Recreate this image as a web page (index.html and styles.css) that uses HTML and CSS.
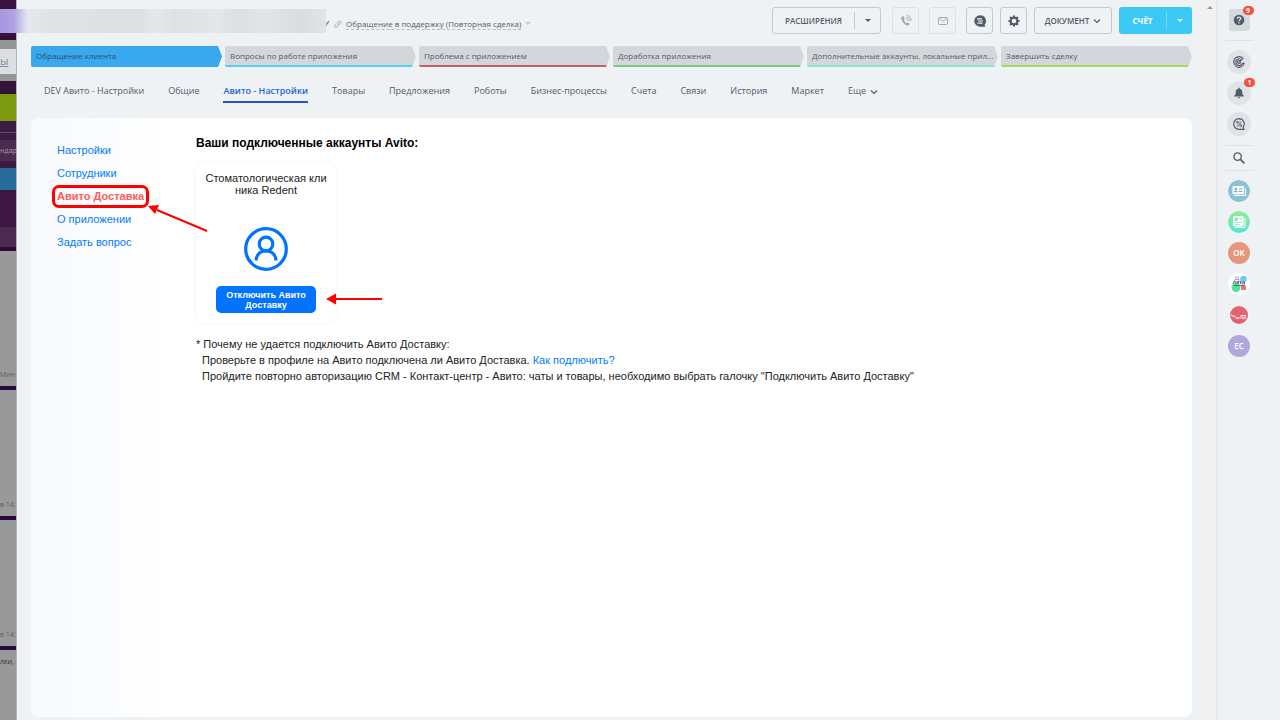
FILE: index.html
```html
<!DOCTYPE html>
<html lang="ru">
<head>
  <meta charset="UTF-8">
  <meta name="viewport" content="width=device-width, initial-scale=1.0">
  <title>Авито - Настройки</title>
  <link rel="stylesheet" href="styles.css">
</head>
<body>
  <div class="underlay">
    <div class="strip strip-top"></div>
    <div class="strip strip-search"><span class="strip-box">ы</span></div>
    <div class="strip strip-dark"></div>
    <div class="strip strip-green"></div>
    <div class="strip strip-line"></div>
    <div class="strip strip-view">ндар</div>
    <div class="strip strip-gap"></div>
    <div class="strip strip-blue"></div>
    <div class="strip strip-purple"></div>
    <div class="strip strip-row"></div>
    <div class="strip strip-card strip-first"><span>Мин</span></div>
    <div class="strip strip-card"><span>в 14:</span></div>
    <div class="strip strip-card"><span>в 14:</span></div>
    <div class="strip strip-last">лки,</div>
  </div>

  <div class="slider">
    <div class="blurred"></div>
    <header class="header">
      <div class="title">
        <svg class="icon-pen" viewBox="0 0 6 8"><path d="M1 7l1-2 3-4" fill="none" stroke="#8b929b" stroke-width="1.5"/></svg>
        <svg class="icon-link" viewBox="0 0 8 8"><path d="M3 5l2.500-2.500M2.500 3.500l2-2a1.400 1.400 0 0 1 2 2l-3.500 3.500a1.400 1.400 0 0 1-2-2l.8-.8" fill="none" stroke="#a0a6ad" stroke-width=".9"/></svg>
        <a class="funnel" href="#">Обращение в поддержку (Повторная сделка)</a>
        <span class="caret caret-light"></span>
      </div>
      <div class="toolbar">
        <div class="btn-group">
          <button class="btn btn-main">РАСШИРЕНИЯ</button>
          <button class="btn btn-drop" aria-label="Ещё расширения"><span class="caret"></span></button>
        </div>
        <button class="btn btn-icon btn-off" aria-label="Позвонить">
          <svg viewBox="0 0 14 14"><path d="M3.200 2.300c-1.500.8-1.200 3.300.3 5.500s3.900 4 5.800 3.700c1-.2 1.500-1.200 1.200-1.700L8.800 8.500c-.5-.3-.9.600-1.400.4C6.500 8.500 5.300 7 5 6c-.1-.5.8-.7.600-1.300L4.700 2.600c-.2-.5-.9-.6-1.500-.3z" fill="#a5abb2"/><path d="M7 4.600a2.500 2.500 0 0 1 2 2.400M7.300 2.900a4.200 4.200 0 0 1 3.400 4M7.600 1.300a5.800 5.800 0 0 1 4.700 5.400" fill="none" stroke="#a5abb2" stroke-width=".9"/></svg>
        </button>
        <button class="btn btn-icon btn-off" aria-label="Письмо">
          <svg viewBox="0 0 14 14"><rect x="2.500" y="3.500" width="9" height="7" rx="1" fill="none" stroke="#a5abb2"/><path d="M3 4l4 3.500L11 4" fill="none" stroke="#a5abb2"/></svg>
        </button>
        <button class="btn btn-icon" aria-label="Чат">
          <svg viewBox="0 0 14 14"><path d="M7 1.300a5.700 5.700 0 1 0 0 11.400h4.500c.8 0 1-.5.500-1.100l-.5-.8A5.700 5.700 0 0 0 7 1.300z" fill="#525c69"/><path d="M4 4.900h5M5 7h5M4.500 9.100h5" stroke="#eef2f4" stroke-width="1.100"/></svg>
        </button>
        <button class="btn btn-icon" aria-label="Настройки">
          <svg viewBox="0 0 14 14"><path d="M7 1.500v11M1.500 7h11M3.100 3.100l7.800 7.800M10.900 3.100l-7.800 7.800" stroke="#525c69" stroke-width="2.200"/><circle cx="7" cy="7" r="3.300" fill="#eef2f4" stroke="#525c69" stroke-width="2"/></svg>
        </button>
        <button class="btn btn-doc">ДОКУМЕНТ <svg class="chevron" viewBox="0 0 8 8"><path d="M1 2.500l3 3 3-3" fill="none" stroke="#525c69" stroke-width="1.200"/></svg></button>
        <div class="btn-group btn-primary">
          <button class="btn btn-bill">СЧЁТ</button>
          <button class="btn btn-drop" aria-label="Ещё счёт"><span class="caret caret-white"></span></button>
        </div>
      </div>
    </header>

    <div class="stages">
      <div class="stage stage-active">Обращение клиента</div>
      <div class="stage stage-cyan">Вопросы по работе приложения</div>
      <div class="stage stage-red">Проблема с приложением</div>
      <div class="stage stage-green">Доработка приложения</div>
      <div class="stage stage-mint">Дополнительные аккаунты, локальные прил...</div>
      <div class="stage stage-lime">Завершить сделку</div>
    </div>

    <nav class="tabs">
      <a href="#">DEV Авито - Настройки</a>
      <a href="#">Общие</a>
      <a href="#" class="tab-active">Авито - Настройки</a>
      <a href="#">Товары</a>
      <a href="#">Предложения</a>
      <a href="#">Роботы</a>
      <a href="#">Бизнес-процессы</a>
      <a href="#">Счета</a>
      <a href="#">Связи</a>
      <a href="#">История</a>
      <a href="#">Маркет</a>
      <a href="#">Еще <svg class="chevron" viewBox="0 0 8 8"><path d="M1 2.500l3 3 3-3" fill="none" stroke="#525c69" stroke-width="1.200"/></svg></a>
    </nav>

    <div class="panel">
      <nav class="menu">
        <a href="#">Настройки</a>
        <a href="#">Сотрудники</a>
        <a href="#" class="menu-active">Авито Доставка</a>
        <a href="#">О приложении</a>
        <a href="#">Задать вопрос</a>
        <svg class="arrow-menu" viewBox="0 0 62 30"><path d="M60 27L10 6" stroke="#f00" stroke-width="2"/><path d="M1 2l11-1-4 9z" fill="#f00"/></svg>
      </nav>
      <main class="content">
        <h1>Ваши подключенные аккаунты Avito:</h1>
        <div class="account">
          <div class="account-name">Стоматологическая кли<br>ника Redent</div>
          <svg class="avatar" viewBox="0 0 44 44" fill="none" stroke="#0074ff"><circle cx="22" cy="22" r="20.300" stroke-width="3.200"/><circle cx="22" cy="17" r="6.800" stroke-width="3.200"/><path d="M12 33.500c.5-6 4.500-9.700 10-9.700s9.500 3.700 10 9.700" stroke-width="3.200"/></svg>
          <button class="disconnect">Отключить Авито Доставку</button>
          <svg class="arrow-button" viewBox="0 0 56 12"><path d="M8 6h48" stroke="#f00" stroke-width="2"/><path d="M0 6l10-5.500v11z" fill="#f00"/></svg>
        </div>
        <div class="note">
          <p>* Почему не удается подключить Авито Доставку:</p>
          <p class="note-item">Проверьте в профиле на Авито подключена ли Авито Доставка. <a href="#">Как подлючить?</a></p>
          <p class="note-item">Пройдите повторно авторизацию CRM - Контакт-центр - Авито: чаты и товары, необходимо выбрать галочку "Подключить Авито Доставку"</p>
        </div>
      </main>
    </div>
  </div>

  <div class="scrollbar"><span class="scroll-up"></span></div>

  <aside class="rail">
    <button class="rail-btn rail-help" aria-label="Помощь">
      <svg viewBox="0 0 12 12"><circle cx="6" cy="6" r="5.300" fill="#525c69"/><path d="M4.300 4.700c.1-2.100 3.500-2 3.400 0C7.700 5.800 6 5.800 6 7.300M6 8.200v1.300" fill="none" stroke="#dfe2e5" stroke-width="1.300"/></svg>
      <span class="badge">9</span>
    </button>
    <hr>
    <div class="rail-chats">
      <button class="rail-btn" aria-label="CoPilot">
        <svg viewBox="0 0 12 12" fill="none" stroke="#525c69"><path d="M10.500 3A5.300 5.300 0 1 0 11.300 7M9 4.200A3.400 3.400 0 1 0 9.400 7.300h2" stroke-width="1.200"/><circle cx="6" cy="6" r="1.400" stroke-width="1.300"/><path d="M7 4.800l2.500-1.300"/></svg>
      </button>
      <button class="rail-btn" aria-label="Уведомления">
        <svg viewBox="0 0 12 12" fill="#525c69"><path d="M5.300.8h1.400v.9c1.800.4 2.500 1.700 2.500 3.300 0 2 .4 2.700 1.600 3.800v.7H1.200v-.7C2.400 7.700 2.800 7 2.800 5c0-1.600.7-2.900 2.500-3.300zM4.700 10.200h2.600c-.2 1.500-2.400 1.500-2.600 0z"/></svg>
        <span class="badge">1</span>
      </button>
      <button class="rail-btn" aria-label="Чаты">
        <svg viewBox="0 0 12 12" fill="none" stroke="#525c69"><path d="M6 .7a5.300 5.300 0 1 0 0 10.600h4.800l-.7-2A5.300 5.300 0 0 0 6 .7z" stroke-width="1.200"/><path d="M5 3L3.300 4.200 5 5.300M3.300 4.200h5M7.300 6.700L9 7.800 7.300 9M9 7.800H4M4.500 6h4"  stroke-width=".8"/></svg>
      </button>
    </div>
    <button class="rail-search" aria-label="Поиск">
      <svg viewBox="0 0 12 12" fill="none" stroke="#525c69"><circle cx="4.600" cy="4.600" r="3.700" stroke-width="1.300"/><path d="M7.400 7.400l4 4" stroke-width="1.700"/></svg>
    </button>
    <div class="users">
      <svg class="user" viewBox="0 0 22 22"><circle cx="11" cy="11" r="11" fill="#8bc2d6"/><path d="M6.500 15.500h11v-7" fill="none" stroke="#fff"/><rect x="4.500" y="6" width="11.500" height="8.300" rx="1" fill="#fff"/><circle cx="7.800" cy="9" r="1.200" fill="#6fa9bf"/><path d="M5.700 12.200c.3-2 3.900-2 4.200 0zM11 8.500h3.500v1H11zM11 11h3.500v1H11z" fill="#6fa9bf"/></svg>
      <svg class="user" viewBox="0 0 22 22"><defs><linearGradient id="news" x1="0" y1="0" x2="0" y2="1"><stop offset="0" stop-color="#92ee8e"/><stop offset="1" stop-color="#55e5d5"/></linearGradient></defs><circle cx="11" cy="11" r="11" fill="url(#news)"/><path d="M7 16.500h10V7" fill="none" stroke="#fff"/><rect x="5" y="5" width="10.500" height="10.500" rx="1" fill="#fff"/><path d="M7 7h2.500v2.500H7zM11 8h3M7 11.500h7M7 13.500h5" fill="#7be9b5" stroke="#7be9b5" stroke-width=".8"/></svg>
      <span class="user user-ok">OK</span>
      <svg class="user" viewBox="0 0 22 22"><circle cx="11" cy="11" r="11" fill="#fff"/><circle cx="8" cy="14.500" r="4.500" fill="#53e29b"/><circle cx="15.500" cy="6" r="3.300" fill="#6ccaf0"/><path d="M13 13h5v4h-5z" fill="#f66b89"/><path d="M7.500 4h3v2.500h-3zM7 6.500h4V9H7z" fill="none" stroke="#a795dc" stroke-width=".8"/><path d="M5 11l1.500-3L8 11M9 8l1 3 1-3M12.500 8v3M14 9h2.500v2H14zM6 12.500h11" fill="none" stroke="#5a5a6a" stroke-width=".9"/></svg>
      <svg class="user" viewBox="0 0 22 22"><circle cx="11" cy="11" r="10" fill="#f8f9fa"/><circle cx="11" cy="11" r="9" fill="#e26270"/><path d="M2.500 10.500l2 1.500 1-1M5 12.500c2-.5 3 0 3 2M10 13.500c-2 .5-1 2 0 1s1-2 1 0M13 14.500v-3h5M14 13.500c2-1 2 2 .5 1.500M17 12v3" fill="none" stroke="#fff"/></svg>
      <span class="user user-ec">EC</span>
    </div>
  </aside>
</body>
</html>
```
FILE: styles.css
```css
* {
  box-sizing: border-box;
}
body {
  display: flex;
  margin: 0;
  height: 100vh;
  overflow: hidden;
  background: #eef2f4;
  color: #525c69;
  font-family: "Open Sans", "Noto Sans", sans-serif;
  font-size: 9px;
}
a {
  color: inherit;
  text-decoration: none;
}
button {
  padding: 0;
  border: 0;
  background: none;
  color: inherit;
  font: inherit;
}
.underlay {
  display: flex;
  flex-direction: column;
  width: 17px;
  overflow: hidden;
  background: #999;
  border-right: 1px solid #b4b6ba;
  font-size: 7px;
  white-space: nowrap;
}
.strip {
  flex: none;
}
.strip-top {
  height: 40px;
  background: #3b1540;
  border-bottom: 4px solid #331038;
}
.strip-search {
  height: 41px;
  padding-top: 9px;
  background: #949494;
}
.strip-box {
  display: block;
  height: 25px;
  background: #dcdfe2;
  color: #858d98;
  font-size: 11px;
  line-height: 24px;
  text-decoration: underline;
}
.strip-dark {
  height: 13px;
  background: #351238;
}
.strip-green {
  height: 27px;
  background: #7b9a12;
}
.strip-line {
  height: 19px;
  border-top: 11px solid #3b1c43;
  border-bottom: 7px solid #3b1c43;
  background: #65496b;
}
.strip-view {
  height: 21px;
  background: #4b2b50;
  color: #a694a9;
  line-height: 22px;
}
.strip-gap {
  height: 7px;
  background: #3b1c43;
}
.strip-blue {
  height: 22px;
  background: #286d9a;
}
.strip-purple {
  height: 37px;
  background: #3b1741;
}
.strip-row {
  height: 24px;
  background: #4b2950;
  border-bottom: 4px solid #2e0b36;
}
.strip-card {
  display: flex;
  align-items: flex-end;
  height: 130px;
  padding-bottom: 7px;
  border-bottom: 4px solid #290a3d;
  color: #5d6066;
}
.strip-first {
  height: 139px;
}
.strip-last {
  padding-top: 7px;
  color: #303236;
}

.slider {
  position: relative;
  display: flex;
  flex: 1;
  flex-direction: column;
  min-width: 0;
  padding: 7px 11px 3px 14px;
}
.blurred {
  position: absolute;
  top: 9px;
  left: -17px;
  width: 326px;
  height: 24px;
  background: linear-gradient(90deg, #a796df 0, #b0a2e2 14px, #e5e9ef 28px, #dfe3e5 50px, #dce0e2 140px, #e4e8ea 156px, #dde1e3 175px, #e3e7e9 215px, #dce0e2 240px, #e1e5e7 262px, #d9dde0 300px, #e0e4e6 326px);
}
.header {
  display: flex;
  justify-content: space-between;
  align-items: center;
  height: 27px;
}
.title {
  display: flex;
  align-items: center;
  gap: 4px;
  padding: 6px 0 0 293px;
}
.icon-pen {
  width: 6px;
  height: 8px;
}
.icon-link {
  width: 8px;
  height: 8px;
}
.funnel {
  border-bottom: 1px dashed #b6bbc0;
  font-size: 8px;
  line-height: 11px;
  white-space: nowrap;
}
.toolbar {
  display: flex;
  gap: 7px;
}
.caret {
  border: 3px solid transparent;
  border-top-color: #525c69;
  border-bottom: 0;
}
.caret-light {
  border-top-color: #c3c8cd;
}
.caret-white {
  border-top-color: #fff;
}
.btn-group,
.btn-icon,
.btn-doc {
  display: flex;
  align-items: center;
  justify-content: center;
  height: 27px;
  border: 1px solid #c4c9ce;
  border-radius: 3px;
}
.btn {
  font-size: 8px;
  font-weight: 600;
}
.btn-main {
  width: 81px;
}
.btn-drop {
  display: flex;
  justify-content: center;
  width: 26px;
  padding: 7px 0;
  border-left: 1px solid #c4c9ce;
}
.btn-icon {
  width: 27px;
}
.btn-icon svg {
  width: 14px;
  height: 14px;
}
.btn-off {
  margin-right: 3px;
  border-color: #dde1e5;
}
.btn-group:first-child {
  margin-right: 4px;
}
.btn-doc {
  gap: 4px;
  width: 78px;
}
.chevron {
  width: 8px;
  height: 8px;
}
.btn-primary {
  border: 0;
  background: #3bc8f5;
  color: #fff;
}
.btn-bill {
  width: 47px;
  font-weight: 700;
}
.btn-primary .btn-drop {
  border-color: #76d9f8;
}

.stages {
  display: grid;
  grid-template-columns: repeat(6, minmax(0, 1fr));
  gap: 3px;
  margin-top: 12px;
}
.stage {
  height: 21px;
  padding: 0 3px 0 5px;
  overflow: hidden;
  border-bottom: 2px solid;
  border-radius: 2px;
  background: #d3d7dc;
  clip-path: polygon(0 0, calc(100% - 4px) 0, 100% 50%, calc(100% - 4px) 100%, 0 100%);
  font-size: 8px;
  line-height: 20px;
  white-space: nowrap;
}
.stage-active {
  background: #39a8ef;
  border-color: #39a8ef;
  color: #2f4c63;
}
.stage-cyan {
  border-bottom-color: #55d0f2;
}
.stage-red {
  border-bottom-color: #c4616a;
}
.stage-green {
  border-bottom-color: #7bca88;
}
.stage-mint {
  border-bottom-color: #86e5d3;
}
.stage-lime {
  border-bottom-color: #a9db56;
}

.tabs {
  display: flex;
  gap: 24px;
  margin-top: 16px;
  padding-left: 13px;
}
.tabs a {
  height: 20px;
  border-bottom: 2px solid transparent;
  line-height: 16px;
  white-space: nowrap;
}
.tabs .chevron {
  margin-left: 2px;
  vertical-align: middle;
}
.tabs .tab-active {
  border-color: #1f57c9;
  color: #1f63d6;
  font-weight: 600;
}

.panel {
  display: flex;
  flex: 1;
  margin-top: 15px;
  border-radius: 8px;
  background: #fff;
  color: #222;
  font-family: "Liberation Sans", Arial, sans-serif;
  font-size: 11px;
}
.menu {
  position: relative;
  display: flex;
  flex-direction: column;
  align-items: flex-start;
  gap: 3px;
  width: 141px;
  padding: 22px 0 0 21px;
  border-radius: 8px 0 0 8px;
  background: linear-gradient(90deg, #f7f9fc, #fff);
}
.menu a {
  padding: 0 5px;
  color: #007bff;
  line-height: 20px;
}
.menu .menu-active {
  margin: -1px 0 -2px;
  border: 3px solid #f00;
  border-radius: 7px;
  padding: 0 2px;
  color: #ff5c5c;
  font-weight: bold;
  line-height: 17px;
}
.arrow-menu {
  position: absolute;
  top: 86px;
  left: 116px;
  width: 62px;
  height: 30px;
}
.content {
  padding: 18px 24px;
}
h1 {
  margin: 0;
  color: #000;
  font-size: 12px;
  line-height: 14px;
}
.account {
  position: relative;
  display: flex;
  flex-direction: column;
  align-items: center;
  width: 140px;
  height: 160px;
  margin-top: 13px;
  padding: 9px 0 10px;
  border-radius: 10px;
  box-shadow: 0 0 6px rgba(0, 0, 0, .05);
}
.account-name {
  line-height: 12px;
  text-align: center;
}
.avatar {
  width: 44px;
  height: 44px;
  margin: auto 0 15px;
}
.disconnect {
  width: 100px;
  height: 27px;
  padding: 0 8px;
  border-radius: 5px;
  background: #0074ff;
  color: #fff;
  font-size: 9px;
  font-weight: bold;
  line-height: 10px;
}
.arrow-button {
  position: absolute;
  top: 130px;
  left: 130px;
  width: 56px;
  height: 12px;
}
.note {
  margin-top: 13px;
}
.note p {
  margin: 0;
  line-height: 16px;
}
.note .note-item {
  padding-left: 6px;
}
.note a {
  color: #007bff;
}

.scrollbar {
  display: flex;
  justify-content: center;
  width: 13px;
  padding-top: 5px;
  background: #f1f1f1;
}
.scroll-up {
  height: 4px;
  border: 3px solid transparent;
  border-top: 0;
  border-bottom-color: #9b9b9b;
}
.rail {
  display: flex;
  flex-direction: column;
  align-items: center;
  width: 64px;
  padding: 9px 20px 0 0;
  border-left: 2px solid #e3e9ee;
}
.rail hr {
  flex: none;
  width: 29px;
  height: 1px;
  margin: 9px 0;
  border: 0;
  background: #dfe3e6;
}
.rail-chats {
  display: flex;
  flex-direction: column;
  gap: 7px;
}
.rail-btn {
  position: relative;
  display: flex;
  flex: none;
  align-items: center;
  justify-content: center;
  width: 24px;
  height: 24px;
  border-radius: 50%;
  background: #dfe3e6;
}
.rail-btn svg,
.rail-search svg {
  width: 12px;
  height: 12px;
}
.rail-help {
  width: 21px;
  height: 22px;
  border-radius: 3px;
  background: #d5d9dc;
}
.badge {
  position: absolute;
  top: -3px;
  right: -4px;
  width: 11px;
  height: 9px;
  border-radius: 5px;
  background: #f4503c;
  color: #fff;
  font-size: 7px;
  font-weight: 700;
  line-height: 9px;
}
.rail-search {
  display: flex;
  align-items: center;
  justify-content: center;
  width: 29px;
  height: 26px;
  margin: 9px 0;
  border-top: 1px solid #dfe3e6;
  border-bottom: 1px solid #dfe3e6;
}
.users {
  display: flex;
  flex-direction: column;
  gap: 9px;
}
.user {
  width: 22px;
  height: 22px;
  border-radius: 50%;
  color: #fff;
  font-size: 8px;
  font-weight: 600;
  line-height: 22px;
  text-align: center;
}
.user-ok {
  background: #e5977e;
}
.user-ec {
  background: #b1a7dc;
}
```
